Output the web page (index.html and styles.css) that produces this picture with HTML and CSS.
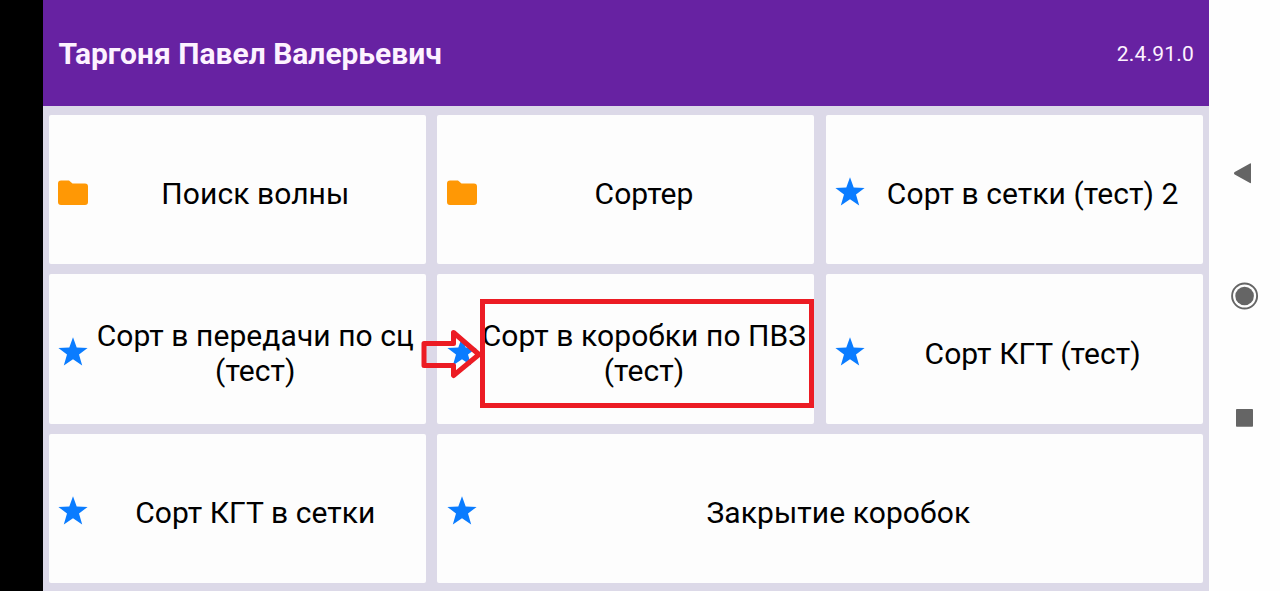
FILE: index.html
```html
<!DOCTYPE html>
<html lang="ru">
<head>
<meta charset="utf-8">
<title>Сортировка</title>
<link rel="stylesheet" href="styles.css">
</head>
<body>
<svg class="defs" width="0" height="0" aria-hidden="true">
  <symbol id="folder" viewBox="0 0 32 26"><path fill="#ff9805" d="M4 .5h8l3.500 3H28q3 0 3 3v15.500q0 3-3 3H4q-3 0-3-3V3.500q0-3 3-3z"/></symbol>
  <symbol id="star" viewBox="0 0 30 29"><path fill="#0a7cff" d="M15 .3l3.700 10.200 10.900.4-8.600 6.700 3.200 10.900L15 22.300l-9.200 6.200L9 17.600.4 10.900l10.900-.4z"/></symbol>
</svg>
<div class="screen">
  <div class="notch"></div>
  <div class="app">
    <header class="header">
      <span class="user">Таргоня Павел Валерьевич</span>
      <span class="version">2.4.91.0</span>
    </header>
    <main class="grid">
      <div class="tile"><svg class="icon folder"><use href="#folder"/></svg><span class="label">Поиск волны</span></div>
      <div class="tile"><svg class="icon folder"><use href="#folder"/></svg><span class="label">Сортер</span></div>
      <div class="tile"><svg class="icon"><use href="#star"/></svg><span class="label">Сорт в сетки (тест) 2</span></div>
      <div class="tile"><svg class="icon"><use href="#star"/></svg><span class="label">Сорт в передачи по сц<br>(тест)</span></div>
      <div class="tile"><svg class="icon"><use href="#star"/></svg><span class="label">Сорт в коробки по ПВЗ<br>(тест)</span>
        <div class="highlight"></div>
        <svg class="arrow" viewBox="0 0 64 52"><path d="M4 15.500H33.500V4.500L59 26.500 33.500 47.500V37.500H4z" fill="none" stroke="#ec1c24" stroke-width="5" stroke-linejoin="round"/></svg>
      </div>
      <div class="tile"><svg class="icon"><use href="#star"/></svg><span class="label">Сорт КГТ (тест)</span></div>
      <div class="tile"><svg class="icon"><use href="#star"/></svg><span class="label">Сорт КГТ в сетки</span></div>
      <div class="tile wide"><svg class="icon"><use href="#star"/></svg><span class="label">Закрытие коробок</span></div>
    </main>
  </div>
  <nav class="nav">
    <svg width="30" height="30" viewBox="0 0 30 30"><path fill="#656565" d="M4 15.200q0-.7.700-1.200L20 5.500q1-.5 1 .5v18.500q0 1-1 .5L4.700 16.500q-.7-.5-.7-1.300z"/></svg>
    <svg width="30" height="30" viewBox="0 0 30 30"><circle cx="14.600" cy="15" r="12.500" fill="none" stroke="#656565" stroke-width="1.900"/><circle cx="14.600" cy="15" r="9.300" fill="#656565"/></svg>
    <svg width="30" height="30" viewBox="0 0 30 30"><rect x="6" y="6" width="17" height="17.800" rx=".8" fill="#656565"/></svg>
  </nav>
</div>
</body>
</html>
```
FILE: styles.css
```css
body {
  margin: 0;
  font-family: Roboto, "Liberation Sans", sans-serif;
  color: #000;
}
.defs { position: absolute; }
.screen {
  display: flex;
  height: 591px;
  overflow: hidden;
  background: #fefefe;
}
.notch { width: 43px; background: #000; }
.app {
  display: flex;
  flex-direction: column;
  width: 1166px;
  background: #dcd9e8;
}
.header {
  box-sizing: border-box;
  display: flex;
  align-items: center;
  justify-content: space-between;
  height: 105.500px;
  padding: 2px 15px 0 15.500px;
  background: #6722a2;
  color: #fdf2ff;
}
.user { font-size: 30px; font-weight: 700; }
.version { padding-top: 1px; font-size: 21px; letter-spacing: 0.200px; }
.grid {
  display: grid;
  grid-template-columns: repeat(3, minmax(0, 1fr));
  grid-template-rows: repeat(3, 149.500px);
  gap: 10px 11.500px;
  padding: 9px 6px 0 5.500px;
}
.tile {
  position: relative;
  display: flex;
  align-items: center;
  box-sizing: border-box;
  padding: 0 4px 0 9.500px;
  border-radius: 2px;
  background: #fdfdfd;
}
.wide { grid-column: span 2; }
.icon { width: 30px; height: 29px; flex: none; margin-top: 5px; }
.folder { width: 32px; height: 26px; margin: 7px -1px 0 -1px; }
.label {
  flex: 1;
  padding: 9px 0 0 1px;
  font-size: 30px;
  line-height: 35px;
  letter-spacing: 0.080px;
  text-align: center;
  white-space: nowrap;
}
.highlight {
  position: absolute;
  left: 43px;
  top: 25px;
  box-sizing: border-box;
  width: 334px;
  height: 109px;
  border: 5px solid #ec1c24;
}
.arrow { position: absolute; left: -17px; top: 54px; width: 64px; height: 52px; }
.nav {
  display: flex;
  flex-direction: column;
  align-items: center;
  gap: 92.500px;
  flex: 1;
  padding-top: 158px;
}
```
